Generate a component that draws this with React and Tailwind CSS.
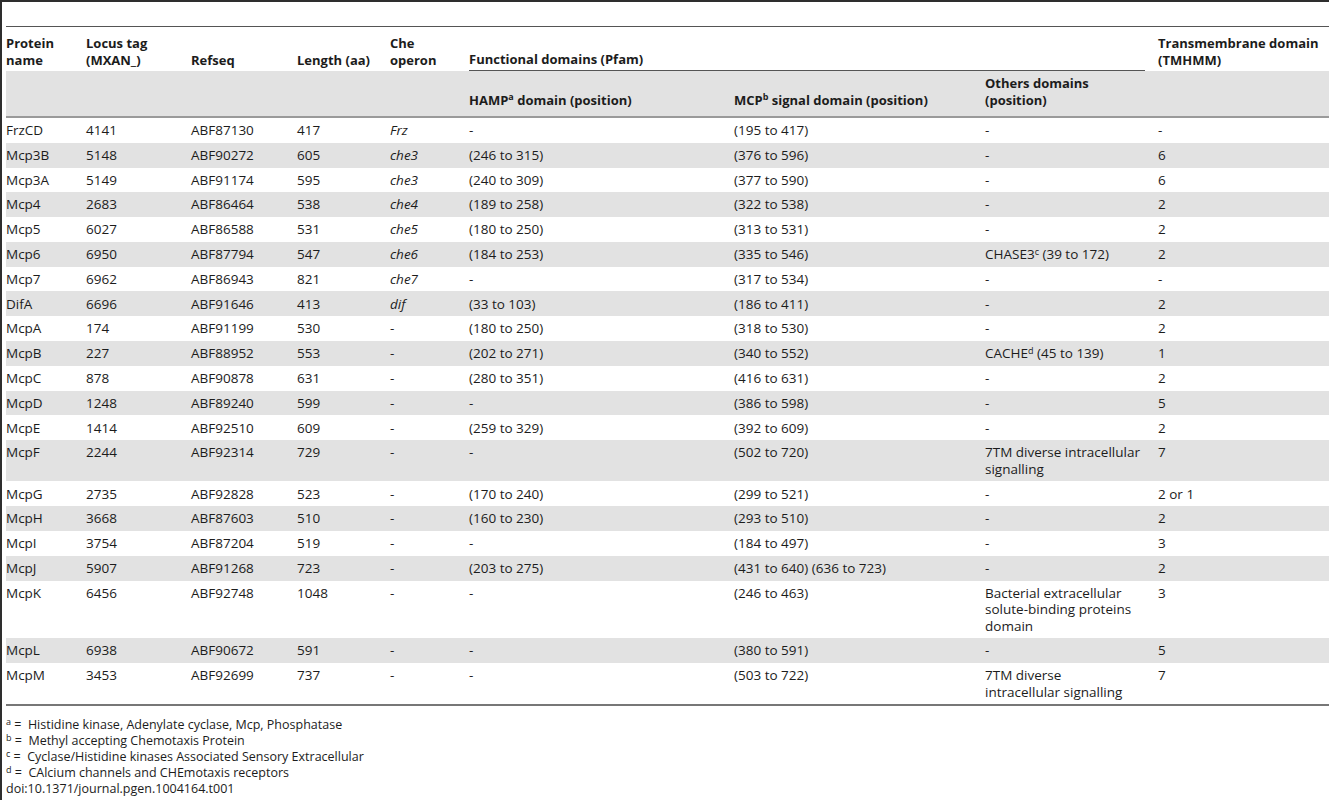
import React from "react";

const rows = [
  ["FrzCD", "4141", "ABF87130", "417", "Frz", "-", "(195 to 417)", "-", "-"],
  ["Mcp3B", "5148", "ABF90272", "605", "che3", "(246 to 315)", "(376 to 596)", "-", "6"],
  ["Mcp3A", "5149", "ABF91174", "595", "che3", "(240 to 309)", "(377 to 590)", "-", "6"],
  ["Mcp4", "2683", "ABF86464", "538", "che4", "(189 to 258)", "(322 to 538)", "-", "2"],
  ["Mcp5", "6027", "ABF86588", "531", "che5", "(180 to 250)", "(313 to 531)", "-", "2"],
  ["Mcp6", "6950", "ABF87794", "547", "che6", "(184 to 253)", "(335 to 546)", ["CHASE3", "c", " (39 to 172)"], "2"],
  ["Mcp7", "6962", "ABF86943", "821", "che7", "-", "(317 to 534)", "-", "-"],
  ["DifA", "6696", "ABF91646", "413", "dif", "(33 to 103)", "(186 to 411)", "-", "2"],
  ["McpA", "174", "ABF91199", "530", "-", "(180 to 250)", "(318 to 530)", "-", "2"],
  ["McpB", "227", "ABF88952", "553", "-", "(202 to 271)", "(340 to 552)", ["CACHE", "d", " (45 to 139)"], "1"],
  ["McpC", "878", "ABF90878", "631", "-", "(280 to 351)", "(416 to 631)", "-", "2"],
  ["McpD", "1248", "ABF89240", "599", "-", "-", "(386 to 598)", "-", "5"],
  ["McpE", "1414", "ABF92510", "609", "-", "(259 to 329)", "(392 to 609)", "-", "2"],
  ["McpF", "2244", "ABF92314", "729", "-", "-", "(502 to 720)", ["7TM diverse intracellular", "signalling"], "7"],
  ["McpG", "2735", "ABF92828", "523", "-", "(170 to 240)", "(299 to 521)", "-", "2 or 1"],
  ["McpH", "3668", "ABF87603", "510", "-", "(160 to 230)", "(293 to 510)", "-", "2"],
  ["McpI", "3754", "ABF87204", "519", "-", "-", "(184 to 497)", "-", "3"],
  ["McpJ", "5907", "ABF91268", "723", "-", "(203 to 275)", "(431 to 640) (636 to 723)", "-", "2"],
  ["McpK", "6456", "ABF92748", "1048", "-", "-", "(246 to 463)", ["Bacterial extracellular", "solute-binding proteins", "domain"], "3"],
  ["McpL", "6938", "ABF90672", "591", "-", "-", "(380 to 591)", "-", "5"],
  ["McpM", "3453", "ABF92699", "737", "-", "-", "(503 to 722)", ["7TM diverse", "intracellular signalling"], "7"],
];

const widths = ["w-[80px]", "w-[105px]", "w-[106px]", "w-[93px]", "w-[79px]", "w-[265px]", "w-[251px]", "w-[173px]", "w-[171px]"];

function Others({ v }) {
  if (!Array.isArray(v)) return v;
  if (v.length === 3 && v[1].length === 1) {
    return (
      <>
        {v[0]}
        <sup className="text-[9px]">{v[1]}</sup>
        {v[2]}
      </>
    );
  }
  return v.map((line, i) => (
    <React.Fragment key={i}>
      {i > 0 && <br />}
      {line}
    </React.Fragment>
  ));
}

export default function App() {
  return (
    <div
      className="h-[800px] w-[1329px] overflow-hidden border-l-2 border-t-2 border-[#2e2e2e] bg-white pl-[4px] text-[13.5px] leading-[16.5px] text-[#1c1c1c]"
      style={{ fontFamily: '"Open Sans", "Noto Sans", sans-serif' }}
    >
      <div className="h-[24px]" />
      <table className="w-[1323px] table-fixed border-collapse">
        <colgroup>
          {widths.map((w, i) => (
            <col key={i} className={w} />
          ))}
        </colgroup>
        <thead className="text-[13px]">
          <tr className="border-t border-[#555]">
            <th className="pb-[3px] pt-[8px] text-left align-bottom font-bold">Protein<br />name</th>
            <th className="pb-[3px] text-left align-bottom font-bold">Locus tag<br />(MXAN_)</th>
            <th className="pb-[3px] text-left align-bottom font-bold">Refseq</th>
            <th className="pb-[3px] text-left align-bottom font-bold">Length (aa)</th>
            <th className="pb-[3px] text-left align-bottom font-bold">Che<br />operon</th>
            <th colSpan={3} className="p-0 text-left align-bottom font-bold">
              <div className="mr-[13px] border-b border-[#555] pb-[3px]">Functional domains (Pfam)</div>
            </th>
            <th className="pb-[3px] text-left align-bottom font-bold">Transmembrane domain<br />(TMHMM)</th>
          </tr>
          <tr className="border-b-2 border-[#9a9a9a] bg-[#e2e2e2]">
            <th className="h-[46px]" />
            <th />
            <th />
            <th />
            <th />
            <th className="pb-[8px] text-left align-bottom font-bold">
              HAMP<sup className="text-[9px]">a</sup> domain (position)
            </th>
            <th className="pb-[8px] text-left align-bottom font-bold">
              MCP<sup className="text-[9px]">b</sup> signal domain (position)
            </th>
            <th className="pb-[8px] text-left align-bottom font-bold">Others domains<br />(position)</th>
            <th />
          </tr>
        </thead>
        <tbody className="border-b-2 border-[#777]">
          {rows.map((r, i) => (
            <tr key={r[0]} className={i % 2 === 1 ? "bg-[#e2e2e2]" : "bg-white"}>
              {r.map((c, j) => (
                <td
                  key={j}
                  className={
                    "py-[4.15px] align-top " +
                    (j === 8 ? "pr-0 " : "pr-[13px] ") +
                    (j === 4 && c !== "-" ? "italic" : "")
                  }
                >
                  <Others v={c} />
                </td>
              ))}
            </tr>
          ))}
        </tbody>
      </table>
      <div className="pt-[11px] text-[12.5px] leading-[16px]">
        <div><sup className="text-[9px]">a</sup>{"\u00a0"}=&nbsp; Histidine kinase, Adenylate cyclase, Mcp, Phosphatase</div>
        <div><sup className="text-[9px]">b</sup>{"\u00a0"}=&nbsp; Methyl accepting Chemotaxis Protein</div>
        <div><sup className="text-[9px]">c</sup>{"\u00a0"}=&nbsp; Cyclase/Histidine kinases Associated Sensory Extracellular</div>
        <div><sup className="text-[9px]">d</sup>{"\u00a0"}=&nbsp; CAlcium channels and CHEmotaxis receptors</div>
        <div>doi:10.1371/journal.pgen.1004164.t001</div>
      </div>
    </div>
  );
}
